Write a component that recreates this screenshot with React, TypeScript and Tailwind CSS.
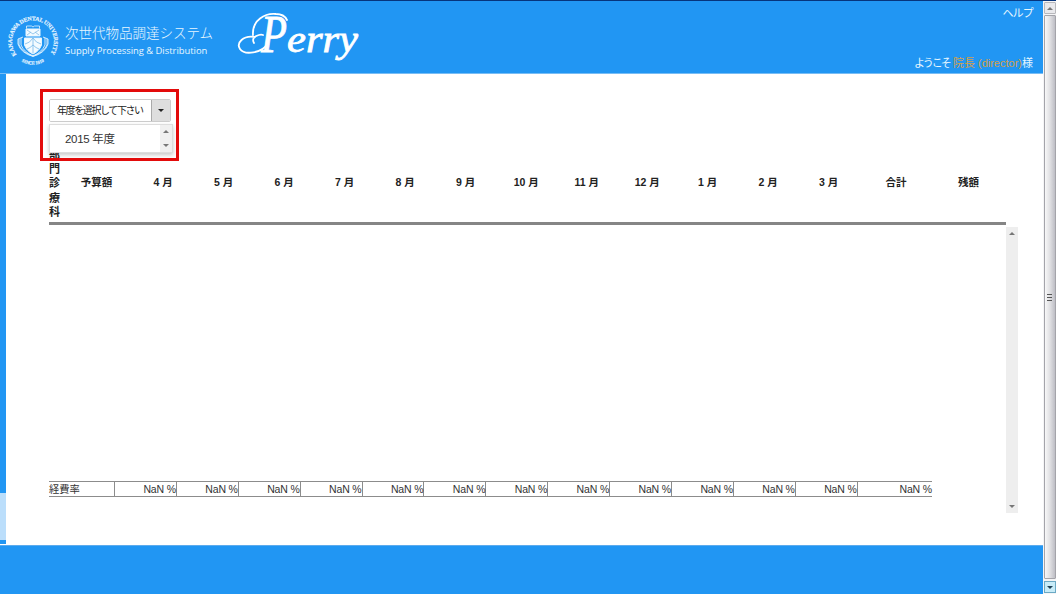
const months = ['4 月', '5 月', '6 月', '7 月', '8 月', '9 月', '10 月', '11 月', '12 月', '1 月', '2 月', '3 月'];
const rates = months.map(() => 'NaN %');

function Seal() {
  return (
    <svg width="52" height="54" viewBox="0 0 52 54" className="shrink-0 overflow-visible" fill="none" stroke="#e4f4ff">
      <defs>
        <path id="ring-top" d="M9.500 41.500 A21 21 0 1 1 42.500 41.500" />
        <path id="ring-bottom" d="M14.500 48.500 Q26 55 37.500 48.500" />
      </defs>
      <g fill="#e4f4ff" stroke="#e4f4ff" strokeWidth=".2" fontFamily="Liberation Serif, serif" fontSize="5.800" fontWeight="bold">
        <text><textPath href="#ring-top" textLength="92">KANAGAWA DENTAL UNIVERSITY</textPath></text>
        <text fontSize="4.800"><textPath href="#ring-bottom" textLength="24" lengthAdjust="spacingAndGlyphs">SINCE 1910</textPath></text>
      </g>
      <path d="M19.500 15.500V13h5l1.500 1 1.500-1h5v2.500" strokeWidth=".8" />
      <path d="M19 16h14v7H19z" fill="#f4fbff" />
      <path d="m20 17 6 4 6-4M20 22l4-3M32 22l-4-3" stroke="#84bee9" strokeWidth=".8" />
      <path d="M17.500 25h17v7q-2 6-8.500 9q-6.500-3-8.500-9z" fill="#f4fbff" />
      <path d="M26 25v15M18 31q5-1 8-6q3 5 8 6M20 36q3-1 6-4q3 3 6 4" stroke="#79b9e9" strokeWidth=".8" />
      <path d="M16 24l-5 2v5q3 9 15 12.500q12-3.500 15-12.500v-5l-5-2M14 25v7q3 7 12 11q9-4 12-11v-7M12 26v6q4 8 14 11q10-3 14-11v-6" strokeWidth=".9" />
    </svg>
  );
}

function BrandMark() {
  return (
    <svg width="124" height="62" viewBox="0 0 124 62" className="ml-[24px] mt-[9px] shrink-0 overflow-visible">
      <path d="M16 33C12 26 23 24 25 25M17 27C5 25-2 33 2 39C6 45 24 44 30 33M15 25C14 10 27 3 38 4C43 4 47 6 49 10" fill="none" stroke="white" strokeWidth="1.8" strokeLinecap="round" />
      <g fill="white" stroke="white" strokeWidth=".8" fontFamily="Liberation Serif, serif" fontStyle="italic">
        <text>
          <tspan x="23" y="42" fontSize="52" textLength="26" lengthAdjust="spacingAndGlyphs">P</tspan>
          <tspan x="49" y="42" fontSize="38" textLength="71" lengthAdjust="spacingAndGlyphs">erry</tspan>
        </text>
      </g>
    </svg>
  );
}

function Arrow({ up = false }: { up?: boolean }) {
  return (
    <svg width="6" height="3" viewBox="0 0 6 3" fill="#777" className="shrink-0">
      <path d={up ? 'M0 3 3 0 6 3z' : 'M0 0h6L3 3z'} />
    </svg>
  );
}

function YearSelect() {
  return (
    <div className="relative h-[23px] w-[122px]">
      <div className="flex h-[23px] overflow-hidden rounded-[2px] border border-[#ccc]">
        <span className="flex w-[101px] items-center whitespace-nowrap bg-white pl-[7px] text-[10px] tracking-[-1.400px] text-[#222]">年度を選択して下さい</span>
        <button className="flex flex-1 items-center justify-center border-l border-[#aaa] bg-[#dedede]" aria-label="開く">
          <svg width="6" height="3"><path d="M0 0h6L3 3z" fill="#222" /></svg>
        </button>
      </div>
      <div className="absolute left-0 top-[25px] z-10 flex h-[29px] w-[124px] border border-[#ddd] bg-white shadow-[0_2px_4px_rgba(0,0,0,0.22)]">
        <span className="flex-1 pl-[15px] pt-[2px] text-[11.500px] leading-[25px] tracking-[-0.300px] text-[#333]">2015 年度</span>
        <div className="flex w-[12px] flex-col items-center justify-between bg-[#f0f0f0] py-[5px]"><Arrow up /><Arrow /></div>
      </div>
      <div className="pointer-events-none absolute -left-[9px] -top-[10px] z-20 h-[72px] w-[139px] border-3 border-[#e30b0b]" />
    </div>
  );
}

function BudgetHeader() {
  return (
    <div className="mt-[25px] flex h-[78px] w-[957px] items-center border-b-3 border-[#858585] pb-[3px] text-center text-[10.500px] font-bold text-[#222]">
      <div className="w-[11px] shrink-0 pt-px text-[11px] leading-[14.200px] break-all">部門診療科</div>
      <div className="w-[73px] shrink-0">予算額</div>
      {months.map((m) => <div key={m} className="w-[60.500px] shrink-0">{m}</div>)}
      <div className="w-[74px] shrink-0">合計</div>
      <div className="w-[71px] shrink-0">残額</div>
    </div>
  );
}

function RateRow() {
  return (
    <div className="flex h-[16px] w-[883px] border-y border-[#8c8c8c] text-right text-[10.500px] leading-[15px] text-[#333]">
      <div className="w-[66px] shrink-0 border-r border-[#8c8c8c] text-left text-[10.300px]">経費率</div>
      {rates.map((r, i) => <div key={i} className="w-[61.900px] shrink-0 border-r border-[#8c8c8c] tracking-[-0.150px]">{r}</div>)}
      <div className="flex-1 tracking-[-0.150px]">NaN %</div>
    </div>
  );
}

function WindowScrollbar() {
  return (
    <div className="flex w-[13px] shrink-0 flex-col border-t border-[#06347c] bg-[#f5f5f6] pl-px">
      <div className="mt-px flex h-[12px] items-center justify-center rounded-[1px] border border-[#b8b8bc] bg-[#e9e9ec]"><Arrow up /></div>
      <div className="mt-px flex flex-1 items-center justify-center rounded-[1px] border border-[#a4a4aa] bg-linear-to-r from-[#f8f8f8] via-[#e0e0e3] to-[#bebec5]">
        <svg width="6" height="7" stroke="#555"><path d="M0 .5h5M0 3.500h5M0 6.500h5" /></svg>
      </div>
      <div className="mt-[2px] mb-px flex h-[12px] items-center justify-center border border-[#6ba9c4] bg-[#c8ecf8]"><svg width="6" height="3"><path d="M0 0h6L3 3z" fill="#1d4056" /></svg></div>
    </div>
  );
}

export default function App() {
  return (
    <div className="flex h-[594px] w-[1056px] overflow-hidden bg-white font-['Liberation_Sans','Noto_Sans_CJK_JP',sans-serif]">
      <div className="flex w-[1043px] shrink-0 flex-col">
        <header className="flex h-[74px] shrink-0 border-t border-b border-t-[#06347c] border-b-[#78bdf5] bg-[#2196f3] text-[#e8f6ff]">
          <div className="ml-[7px] mt-[12px]"><Seal /></div>
          <div className="ml-[6px] w-[149px] shrink-0 whitespace-nowrap pt-[23px]">
            <div className="text-[13.500px] leading-[20px] font-light">次世代物品調達システム</div>
            <div className="font-['Open_Sans',sans-serif] text-[9.400px] leading-[14px]">Supply Processing &amp; Distribution</div>
          </div>
          <BrandMark />
          <div className="ml-auto flex flex-col items-end justify-between pr-[10px] pt-[4px] pb-px text-[11px] leading-[17px]">
            <a className="tracking-[-0.800px]">ヘルプ</a>
            <div className="whitespace-nowrap"><span className="tracking-[-2px]">ようこそ</span><span className="text-[#d2a04a]"> 院長 (director)</span>様</div>
          </div>
        </header>
        <div className="flex h-[471px] shrink-0">
          <aside className="flex w-[6px] shrink-0 flex-col bg-[#2196f3]">
            <div className="mt-[419px] h-[47px] bg-[#bbdefb]" />
            <div className="mt-auto h-px bg-white" />
          </aside>
          <main className="pl-[43px] pt-[25px]">
            <YearSelect />
            <BudgetHeader />
            <div className="mt-[2px] flex h-[286px] w-[969px]">
              <div className="flex w-[957px] flex-col justify-end pb-[16px]"><RateRow /></div>
              <div className="flex w-[12px] flex-col items-center justify-between bg-[#eee] py-[5px]"><Arrow up /><Arrow /></div>
            </div>
          </main>
        </div>
        <footer className="flex-1 border-t border-[#5cabed] bg-[#2196f3]" />
      </div>
      <WindowScrollbar />
    </div>
  );
}
